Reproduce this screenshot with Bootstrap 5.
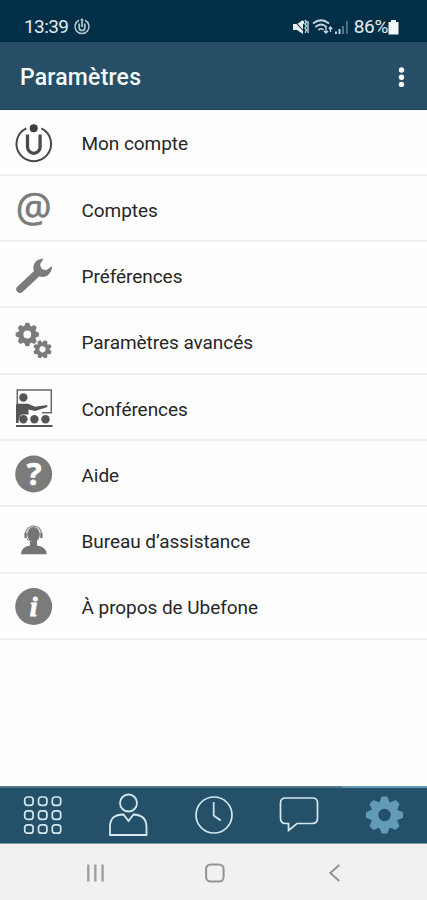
<!DOCTYPE html>
<html lang="fr">
<head>
<meta charset="utf-8">
<meta name="viewport" content="width=device-width, initial-scale=1">
<title>Paramètres</title>
<link href="https://cdn.jsdelivr.net/npm/bootstrap@5.3.0/dist/css/bootstrap.min.css" rel="stylesheet">
<style>
body{font-family:Roboto,"Noto Sans",sans-serif;background:#fefefe;color:#262626}
svg{display:block;flex:none;overflow:visible}
.screen{height:900px;overflow:hidden}
.statusbar{height:42px;background:#012f48;color:#e3eaee;padding:11px 28px 0 24px;font-size:19px;line-height:30px}
.clock{letter-spacing:-.6px}
.clock-group{gap:6px}
.battery-text{letter-spacing:-.3px}
.appbar{height:67.5px;background:#264f67;border-bottom:1px solid #1d465e;padding:5px 20px 0}
.app-title{font-size:23px;font-weight:500;line-height:30px;color:#f6fafc;letter-spacing:.2px}
.settings .list-group-item{height:66.3px;padding:4px 14px 0;border-color:#f0f0f0;border-width:0 0 2px;background:transparent;color:#262626;font-size:19px;letter-spacing:-.05px;gap:27.5px}
.settings .list-group-item:last-child{border-bottom-width:2px}
.settings .list-group-item span{padding-top:2px}
.tabbar{height:57.5px;background:#245069;border-top:2px solid #54798c;border-bottom:1px solid #7d97a4;color:#d3e8ef}
.tab-active{color:#639bb6;box-shadow:0 -2px 0 #639bb6}
.sysnav{height:56.5px;background:#f1f1f1;padding-top:2px}
</style>
</head>
<body>
<svg width="0" height="0" class="position-absolute" aria-hidden="true">
  <defs>
    <path id="tooth" d="M-5.4-12 L-2.8-18.5 H2.8 L5.4-12Z"/>
    <g id="gear">
      <circle r="10" fill="none" stroke="currentColor" stroke-width="7.6"/>
      <g fill="currentColor">
        <use href="#tooth"/><use href="#tooth" transform="rotate(45)"/><use href="#tooth" transform="rotate(90)"/><use href="#tooth" transform="rotate(135)"/>
        <use href="#tooth" transform="rotate(180)"/><use href="#tooth" transform="rotate(225)"/><use href="#tooth" transform="rotate(270)"/><use href="#tooth" transform="rotate(315)"/>
      </g>
    </g>
  </defs>
</svg>
<div class="screen d-flex flex-column">
  <div class="statusbar d-flex justify-content-between">
    <div class="clock-group d-flex align-items-center">
      <span class="clock">13:39</span>
      <svg width="16" height="17" viewBox="0 0 16 17" fill="none" stroke="#b9c9d2" stroke-width="1.5"><path d="M5 2.3A7 7 0 1 0 11 2.3"/><path d="M5.2 5.5v4.2a2.8 2.8 0 0 0 5.6 0V5.5M8 3v6" stroke-width="1.7"/><circle cx="8" cy="1.800" r="1.400" fill="#b9c9d2" stroke="none"/></svg>
    </div>
    <div class="d-flex align-items-center">
      <svg width="61" height="18" viewBox="0 0 61 18">
        <g fill="#e9eff2"><path d="M0 6h4l6-4v14l-6-4H0z"/><path d="M10.500 3v3M12 2l1.500 2-1.500 2 1.500 2-1.500 2 1.500 2-1.500 3M15 3v12" fill="none" stroke="#d4dee4" stroke-width="1.300"/><path d="M1 2.500l11 12" stroke="#012f48" stroke-width="1.100"/></g>
        <g fill="none" stroke="#cbd7de" stroke-width="1.700"><path d="M20 5.500q8-6.500 16 0M22.500 9q5.500-5 11 0M25.500 12q3-2.500 5 0"/><path d="M33 9v6M31 13l2 2 2-2M37.500 14v-5M35.800 11l1.700-2 1.700 2" stroke-width="1.300"/></g>
        <g fill="#c2d0d8"><path d="M42 13.500h2V16h-2zM45.500 11h2v5h-2z"/><path d="M49 8h2v8h-2zM53 3h1.700v13H53z" fill="#54748a"/></g>
      </svg>
      <span class="battery-text">86%</span>
      <svg width="11" height="16" viewBox="0 0 11 16"><path d="M3 1h5v2h2.500v12.500H.5V3H3z" fill="#f4f7f8"/></svg>
    </div>
  </div>
  <header class="appbar d-flex align-items-center justify-content-between">
    <h1 class="app-title m-0">Paramètres</h1>
    <svg width="10" height="24" viewBox="0 0 10 24" fill="#f8fbfc"><circle cx="4.500" cy="4" r="2.700"/><circle cx="4.500" cy="11.200" r="2.700"/><circle cx="4.500" cy="18.400" r="2.700"/></svg>
  </header>

  <main class="flex-grow-1">
    <div class="settings list-group list-group-flush">
      <a href="#" class="list-group-item d-flex align-items-center">
        <svg width="40" height="40" viewBox="0 0 40 40"><path d="M12.300 4.300A17.300 17.300 0 1 0 27.300 4.300" fill="none" stroke="#484848" stroke-width="2"/><circle cx="19.700" cy="4.300" r="4" fill="#3e3e3e"/><path d="M13.500 10.500V23a6.300 6.300 0 0 0 12.600 0V10.500" fill="none" stroke="#4a4a4a" stroke-width="3.300"/></svg>
        <span>Mon compte</span>
      </a>
      <a href="#" class="list-group-item d-flex align-items-center">
        <svg width="40" height="40" viewBox="0 0 40 40"><text x="19.700" y="31.800" text-anchor="middle" font-family="Open Sans" font-size="40" fill="#7b7b7b" stroke="#7b7b7b" stroke-width=".7">@</text></svg>
        <span>Comptes</span>
      </a>
      <a href="#" class="list-group-item d-flex align-items-center">
        <svg width="40" height="40" viewBox="0 0 40 40" fill="#7b7b7b"><path d="M6 33.200L25 15.500" stroke="#7b7b7b" stroke-width="7.400" stroke-linecap="round"/><path d="M29.600 2.700C22.500 2.300 17.500 8.500 20 15.500L25.500 20.500C32 22.500 38.300 17.500 37.900 10L32.300 14.200 27.600 12.900 26 8.300Z"/></svg>
        <span>Préférences</span>
      </a>
      <a href="#" class="list-group-item d-flex align-items-center">
        <svg width="40" height="40" viewBox="0 0 40 40" color="#7b7b7b"><use href="#gear" transform="translate(13.300 11.500) scale(.63)"/><use href="#gear" transform="translate(28.500 26.300) rotate(22.500) scale(.5)"/></svg>
        <span>Paramètres avancés</span>
      </a>
      <a href="#" class="list-group-item d-flex align-items-center">
        <svg width="40" height="40" viewBox="0 0 40 40" fill="#555"><path d="M3.300 16V1H37.300V23.800H28" fill="none" stroke="#666" stroke-width="1.500"/><circle cx="9.400" cy="8.500" r="4.200"/><path d="M2 16Q2 14.700 3.500 14.700H14L21 17.800 33 16 33.500 18 21 22 14.500 20.500V25.500H8Q4.500 27 4.500 34H2Z"/><circle cx="9.400" cy="30.200" r="4.200"/><circle cx="20.400" cy="30.200" r="4.200"/><circle cx="31.500" cy="30.200" r="4.200"/><path d="M2 36h36.500v2H2z"/></svg>
        <span>Conférences</span>
      </a>
      <a href="#" class="list-group-item d-flex align-items-center">
        <svg width="40" height="40" viewBox="0 0 40 40"><circle cx="19.700" cy="19" r="18.500" fill="#7b7b7b"/><text x="20" y="29.800" text-anchor="middle" font-family="Open Sans" font-weight="700" font-size="31" fill="#fff" stroke="#fff" stroke-width=".6">?</text></svg>
        <span>Aide</span>
      </a>
      <a href="#" class="list-group-item d-flex align-items-center">
        <svg width="40" height="40" viewBox="0 0 40 40" fill="#757575"><path d="M11.500 15.500V13a8 8 0 0 1 16 0V15.500" fill="none" stroke="#999" stroke-width="1.500"/><ellipse cx="19.500" cy="13.500" rx="6.300" ry="7.600"/><path d="M10.500 12h2.200v5h-2.200zM26.300 12h2.200v5h-2.200zM16 19h7v5.500q9.700 1.500 9.700 8.800H7q0-7.300 9-8.800z"/><path d="M12 16q1 4 6 4.500" fill="none" stroke="#999" stroke-width="1"/></svg>
        <span>Bureau d’assistance</span>
      </a>
      <a href="#" class="list-group-item d-flex align-items-center">
        <svg width="40" height="40" viewBox="0 0 40 40"><circle cx="19.700" cy="18.500" r="18.500" fill="#7b7b7b"/><text x="19.500" y="27.500" text-anchor="middle" font-family="Liberation Serif" font-weight="700" font-style="italic" font-size="28" fill="#fff" stroke="#fff" stroke-width=".9">i</text></svg>
        <span>À propos de Ubefone</span>
      </a>
    </div>
  </main>

  <nav class="tabbar nav nav-fill flex-nowrap">
    <a href="#" class="col d-flex align-items-center justify-content-center text-reset">
      <svg width="40" height="40" viewBox=".3 0 40 40" fill="none" stroke="currentColor" stroke-width="1.700">
        <g id="keys"><rect x="2" y="2" width="8.400" height="8.400" rx="2.800"/><rect x="15.800" y="2" width="8.400" height="8.400" rx="2.800"/><rect x="29.600" y="2" width="8.400" height="8.400" rx="2.800"/></g>
        <use href="#keys" y="13.900"/><use href="#keys" y="27.800"/>
      </svg>
    </a>
    <a href="#" class="col d-flex align-items-center justify-content-center text-reset">
      <svg width="40" height="44" viewBox="0 0 40 44" fill="none" stroke="currentColor" stroke-width="1.800"><circle cx="20.500" cy="10" r="8.500"/><path d="M2 42V34Q2 21.500 15.500 21.500L20.500 28 25.500 21.500Q38.500 22 38.500 34V42Z"/></svg>
    </a>
    <a href="#" class="col d-flex align-items-center justify-content-center text-reset">
      <svg width="40" height="40" viewBox=".3 0 40 40" fill="none" stroke="currentColor" stroke-width="1.700"><circle cx="20.300" cy="20" r="18"/><path d="M20 7v13.500l7 5"/></svg>
    </a>
    <a href="#" class="col d-flex align-items-center justify-content-center text-reset">
      <svg width="40" height="40" viewBox="0 0 40 40" fill="none" stroke="currentColor" stroke-width="1.700"><path d="M6.500 3H33.500Q38.500 3 38.500 8V23Q38.500 28.500 33.500 28.500H18L9.500 35.500V28.500H6.500Q1.500 28.500 1.500 23V8Q1.500 3 6.500 3Z"/></svg>
    </a>
    <a href="#" class="tab-active col d-flex align-items-center justify-content-center">
      <svg width="40" height="40" viewBox="0 0 40 40"><use href="#gear" x="20.500" y="20"/></svg>
    </a>
  </nav>
  <div class="sysnav d-flex align-items-center justify-content-center">
    <svg width="260" height="22" viewBox=".7 0 260 22" fill="none" stroke="#939393" stroke-width="2"><path d="M5 2.500v17M12 2.500v17M19.300 2.500v17" stroke="#a0a0a0" stroke-width="2.400"/><rect x="122.800" y="2.500" width="17.500" height="17" rx="4.500"/><path d="M256 3l-9 8 9 8"/></svg>
  </div>
</div>
<script src="https://cdn.jsdelivr.net/npm/bootstrap@5.3.0/dist/js/bootstrap.bundle.min.js"></script>
</body>
</html>
